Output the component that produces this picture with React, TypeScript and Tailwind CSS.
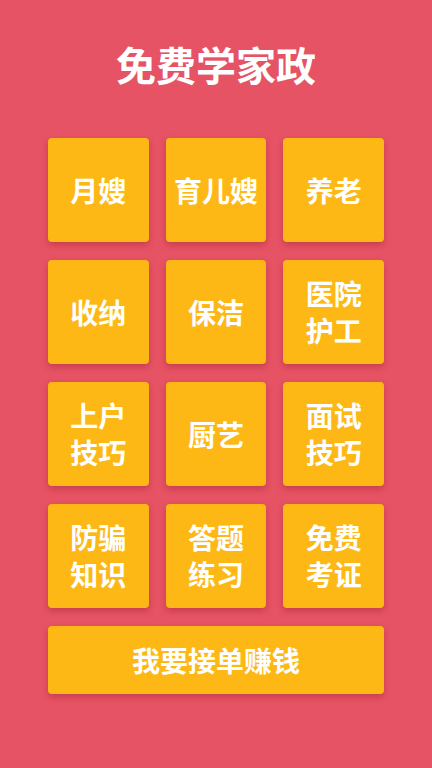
const tiles = [
  ["月嫂"],
  ["育儿嫂"],
  ["养老"],
  ["收纳"],
  ["保洁"],
  ["医院", "护工"],
  ["上户", "技巧"],
  ["厨艺"],
  ["面试", "技巧"],
  ["防骗", "知识"],
  ["答题", "练习"],
  ["免费", "考证"],
];

export default function App() {
  return (
    <div
      className="min-h-screen w-full bg-[#e65364] px-[48px] pt-[38px] pb-10"
      style={{ fontFamily: '"Noto Sans CJK SC", "Noto Sans", sans-serif' }}
    >
      <h1 className="text-center text-[40px] leading-[52px] font-bold text-white">
        免费学家政
      </h1>

      <div className="mt-[48px] grid grid-cols-3 gap-x-[17px] gap-y-[18px]">
        {tiles.map((lines, i) => (
          <div
            key={i}
            className="flex h-[104px] flex-col items-center justify-center rounded-[4px] bg-[#feb815] shadow-[0_3px_6px_rgba(140,20,40,0.35)]"
          >
            {lines.map((t) => (
              <span
                key={t}
                className="text-[28px] leading-[37px] font-bold text-white"
              >
                {t}
              </span>
            ))}
          </div>
        ))}
      </div>

      <div className="mt-[18px] flex h-[68px] items-center justify-center rounded-[4px] bg-[#feb815] shadow-[0_3px_6px_rgba(140,20,40,0.35)]">
        <span className="text-[28px] font-bold text-white">我要接单赚钱</span>
      </div>
    </div>
  );
}
